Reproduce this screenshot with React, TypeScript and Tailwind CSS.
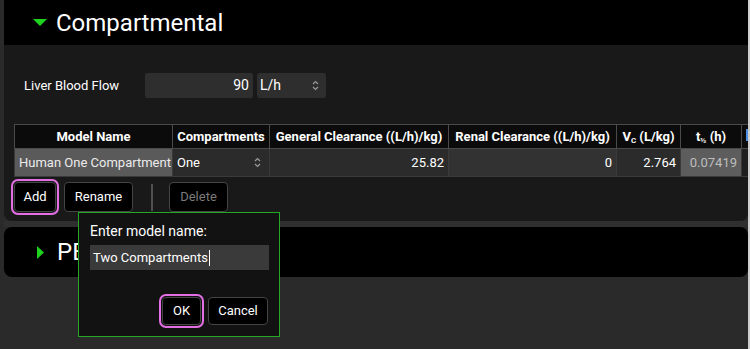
import React from 'react';

const th = 'border border-[#4a4a4a] px-1 font-bold text-white text-center whitespace-nowrap';
const td = 'border border-[#3a3a3a] px-1 whitespace-nowrap';

const Caret: React.FC = () => (
  <svg width="7" height="11" viewBox="0 0 7 11" className="text-[#9a9a9a]">
    <path d="M1 4 L3.5 1.5 L6 4" fill="none" stroke="currentColor" strokeWidth="1.2" />
    <path d="M1 7 L3.5 9.5 L6 7" fill="none" stroke="currentColor" strokeWidth="1.2" />
  </svg>
);

const Btn: React.FC<{ label: string; w: string; disabled?: boolean; marked?: boolean }> = ({ label, w, disabled, marked }) => (
  <button
    className={`${w} h-[30px] bg-black border border-[#444] rounded-[4px] text-[13px] ${disabled ? 'text-[#7a7a7a]' : 'text-white'} ${marked ? 'outline-2 outline-[#e46fe4] outline-offset-[1px]' : ''}`}
  >
    {label}
  </button>
);

const App: React.FC = () => {
  return (
    <div className="w-[750px] h-[349px] bg-[#2a2a2a] relative overflow-hidden flex text-white font-['Roboto','Liberation_Sans',sans-serif]">
      <div className="w-[748px] pl-[4px] flex flex-col">
        {/* Compartmental section */}
        <div className="bg-[#191919] rounded-b-lg h-[221px]">
          <div className="bg-black h-[45px] flex items-center pl-[29px] gap-[8px]">
            <svg width="15" height="8" viewBox="0 0 15 8"><path d="M0 0 H14 L7 7 Z" fill="#1fd11f" /></svg>
            <span className="text-[24px] leading-none">Compartmental</span>
          </div>

          <div className="flex items-center pl-[20px] mt-[28px] h-[25px]">
            <span className="w-[121px] text-[13px]">Liver Blood Flow</span>
            <div className="w-[108px] h-[25px] bg-[#2e2e2e] rounded-[2px] flex items-center justify-end pr-[4px] text-[14px]">90</div>
            <div className="ml-[4px] w-[69px] h-[25px] bg-[#2e2e2e] rounded-[3px] flex items-center justify-between pl-[3px] pr-[7px] text-[14px]">
              <span>L/h</span>
              <Caret />
            </div>
          </div>

          <div className="ml-[10px] mt-[26px] overflow-hidden">
            <table className="border-collapse text-[13px] table-fixed w-[760px]">
              <colgroup>
                <col className="w-[158px]" />
                <col className="w-[97px]" />
                <col className="w-[179px]" />
                <col className="w-[168px]" />
                <col className="w-[64px]" />
                <col className="w-[61px]" />
                <col className="w-[33px]" />
              </colgroup>
              <thead>
                <tr className="h-[24px] bg-[#0b0b0b]">
                  <th className={th}>Model Name</th>
                  <th className={th}>Compartments</th>
                  <th className={th}>General Clearance ((L/h)/kg)</th>
                  <th className={th}>Renal Clearance ((L/h)/kg)</th>
                  <th className={th}>
                    V<sub className="text-[8px] align-baseline">C</sub> (L/kg)
                  </th>
                  <th className={th}>
                    t<sub className="text-[8px] align-baseline">½</sub> (h)
                  </th>
                  <th className={`${th} text-left`}><span className="inline-block w-[3px] h-[12px] bg-[#4a8fe0]" /></th>
                </tr>
              </thead>
              <tbody>
                <tr className="h-[28px]">
                  <td className={`${td} bg-[#5a5a5a] text-[#ececec]`}>Human One Compartment</td>
                  <td className={`${td} bg-[#2b2b2b]`}>
                    <div className="flex items-center justify-between pr-[4px]">
                      <span>One</span>
                      <Caret />
                    </div>
                  </td>
                  <td className={`${td} bg-[#2b2b2b] text-right`}>25.82</td>
                  <td className={`${td} bg-[#323232] text-right`}>0</td>
                  <td className={`${td} bg-[#2b2b2b] text-right`}>2.764</td>
                  <td className={`${td} bg-[#5d5d5d] text-[#bdbdbd] text-right`}>0.07419</td>
                  <td className={`${td} bg-[#1f1f1f]`}></td>
                </tr>
              </tbody>
            </table>
          </div>

          <div className="flex items-center ml-[10px] mt-[5px]">
            <Btn label="Add" w="w-[42px]" marked />
            <div className="ml-[8px]">
              <Btn label="Rename" w="w-[69px]" />
            </div>
            <div className="ml-[18px] w-[2px] h-[27px] bg-[#505050]" />
            <div className="ml-[16px]">
              <Btn label="Delete" w="w-[59px]" disabled />
            </div>
          </div>
        </div>

        {/* PBPK section */}
        <div className="h-[6px] bg-[#2f2f2f]" />
        <div className="bg-black rounded-lg h-[50px] flex items-center pl-[33px] gap-[12px]">
          <svg width="8" height="13" viewBox="0 0 8 13"><path d="M0 0 L7 6.5 L0 13 Z" fill="#1fd11f" /></svg>
          <span className="text-[24px] leading-none">PBPK</span>
        </div>
      </div>
      <div className="w-[2px] bg-[#cfcfcf]" />

      {/* Add model dialog */}
      <div className="absolute left-[78px] top-[212px] w-[202px] h-[125px] bg-[#121212] border border-[#22a822] px-[11px] pt-[10px]">
        <div className="text-[14px] leading-[16px]">Enter model name:</div>
        <div className="mt-[6px] w-[179px] h-[25px] bg-[#3a3a3a] flex items-center pl-[3px] text-[13px]">
          Two Compartments<span className="inline-block w-[1px] h-[16px] bg-white ml-[1px]" />
        </div>
        <div className="flex justify-end gap-[7px] mt-[27px]">
          <button className="w-[39px] h-[28px] bg-black border border-[#444] rounded-[4px] text-[13px] outline-2 outline-[#e46fe4] outline-offset-[1px]">OK</button>
          <button className="w-[60px] h-[28px] bg-black border border-[#444] rounded-[4px] text-[13px]">Cancel</button>
        </div>
      </div>
    </div>
  );
};

export default App;
